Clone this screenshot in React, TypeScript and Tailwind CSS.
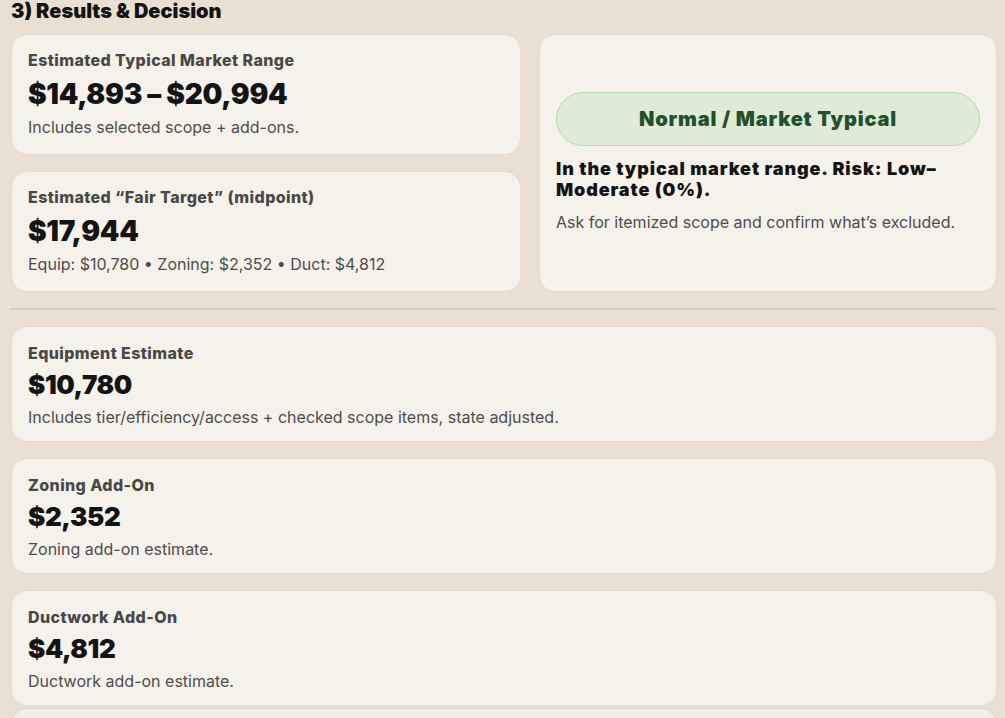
import React from "react";

type Stat = {
  label: string;
  value: string;
  note: string;
};

const addOns: Stat[] = [
  {
    label: "Equipment Estimate",
    value: "$10,780",
    note: "Includes tier/efficiency/access + checked scope items, state adjusted.",
  },
  { label: "Zoning Add-On", value: "$2,352", note: "Zoning add-on estimate." },
  { label: "Ductwork Add-On", value: "$4,812", note: "Ductwork add-on estimate." },
];

const TopCard: React.FC<Stat> = ({ label, value, note }) => (
  <div className="bg-[#f5f1eb] border border-[#e1dbd1] rounded-[16px] px-4 pt-[15px] pb-[15px]">
    <div className="text-[16px] leading-5 font-extrabold tracking-[0.4px] text-[#4a4845]">{label}</div>
    <div className="mt-[7px] text-[28px] leading-[34px] font-black text-[#141414] tracking-[-0.3px]">
      {value}
    </div>
    <div className="mt-1 text-[16px] leading-6 text-[#4f4d4a]">{note}</div>
  </div>
);

const RowCard: React.FC<Stat> = ({ label, value, note }) => (
  <div className="bg-[#f5f1eb] border border-[#e1dbd1] rounded-[16px] px-4 pt-4 pb-[12px]">
    <div className="text-[16px] leading-5 font-extrabold tracking-[0.4px] text-[#4a4845]">{label}</div>
    <div className="mt-[6px] text-[26px] leading-[32px] font-black text-[#141414] tracking-[-0.4px]">
      {value}
    </div>
    <div className="mt-1 text-[16px] leading-6 text-[#4f4d4a]">{note}</div>
  </div>
);

export default function App() {
  return (
    <div
      className="min-h-screen h-[718px] overflow-hidden bg-[#e9e0d3] pl-[11px] pr-[8px]"
      style={{ fontFamily: "Inter, 'Noto Sans', sans-serif" }}
    >
      <h2 className="pt-[1px] text-[20px] leading-[20px] font-black text-[#141414]">
        3) Results &amp; Decision
      </h2>

      <div className="mt-[13px] grid grid-cols-[510px_1fr] gap-[18px]">
        <div className="flex flex-col gap-4">
          <TopCard
            label="Estimated Typical Market Range"
            value="$14,893 – $20,994"
            note="Includes selected scope + add-ons."
          />
          <TopCard
            label="Estimated “Fair Target” (midpoint)"
            value="$17,944"
            note="Equip: $10,780 • Zoning: $2,352 • Duct: $4,812"
          />
        </div>

        <div className="bg-[#f5f1eb] border border-[#e1dbd1] rounded-[16px] px-4 flex flex-col justify-center">
          <div className="rounded-full border border-[#b3dbb0] bg-[#dfead7] py-3 text-center text-[20px] leading-7 font-black tracking-[0.8px] text-[#244f2d]">
            Normal / Market Typical
          </div>
          <div className="mt-3 text-[18px] leading-[21px] font-black tracking-[0.9px] text-[#141414]">
            In the typical market range. Risk: Low–Moderate (0%).
          </div>
          <div className="mt-[10px] text-[16px] leading-6 text-[#4f4d4a]">
            Ask for itemized scope and confirm what’s excluded.
          </div>
        </div>
      </div>

      <div className="mt-[16px] h-[2px] bg-[#d7cfc3] ml-[-1px]" />

      <div className="mt-[16px] flex flex-col gap-4">
        {addOns.map((s) => (
          <RowCard key={s.label} {...s} />
        ))}
      </div>

      <div className="mt-[2px] h-[40px] bg-[#f2eee8] border border-[#ddd6cc] rounded-t-[16px]" />
    </div>
  );
}
